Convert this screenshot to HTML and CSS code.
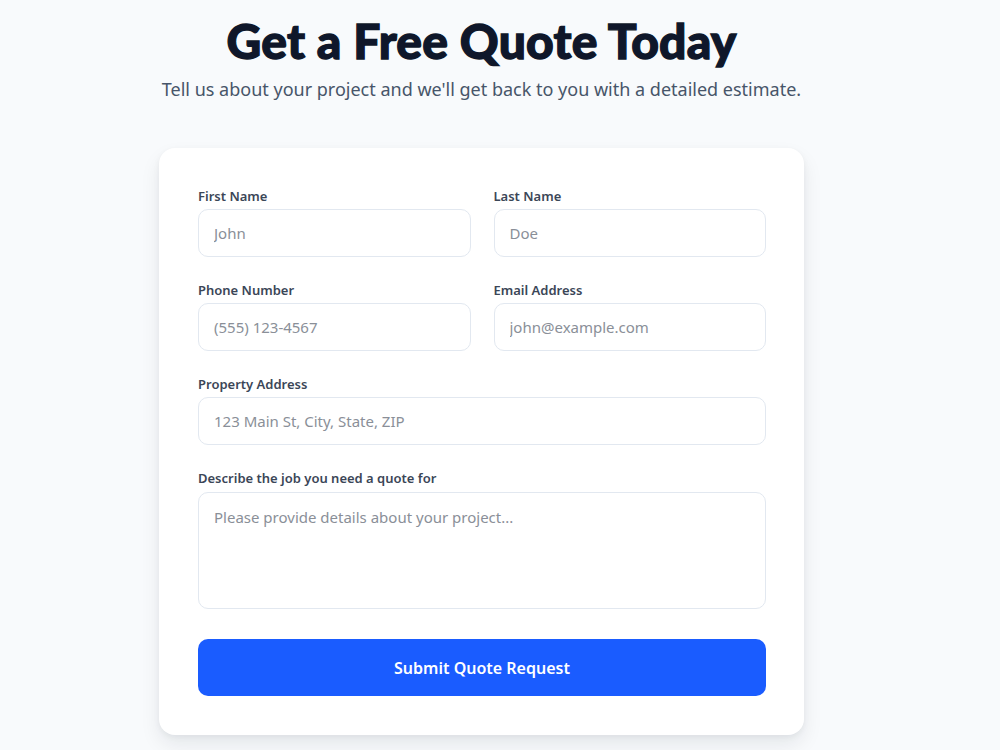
FILE: index.html
```html
<!DOCTYPE html>
<html lang="en">
<head>
    <meta charset="UTF-8">
    <meta name="viewport" content="width=device-width, initial-scale=1.0">
    <title>Get a Free Quote</title>
    <link rel="stylesheet" href="styles.css">
</head>
<body>
    <main class="page">
        <header class="intro">
            <h1>Get a Free Quote Today</h1>
            <p class="subtitle">Tell us about your project and we'll get back to you with a detailed estimate.</p>
        </header>

        <form class="quote-card" onsubmit="return false;">
            <div class="row">
                <div class="field">
                    <label for="firstName">First Name</label>
                    <input type="text" id="firstName" placeholder="John">
                </div>
                <div class="field">
                    <label for="lastName">Last Name</label>
                    <input type="text" id="lastName" placeholder="Doe">
                </div>
            </div>

            <div class="row">
                <div class="field">
                    <label for="phone">Phone Number</label>
                    <input type="tel" id="phone" placeholder="(555) 123-4567">
                </div>
                <div class="field">
                    <label for="email">Email Address</label>
                    <input type="email" id="email" placeholder="john@example.com">
                </div>
            </div>

            <div class="field">
                <label for="address">Property Address</label>
                <input type="text" id="address" placeholder="123 Main St, City, State, ZIP">
            </div>

            <div class="field">
                <label for="details">Describe the job you need a quote for</label>
                <textarea id="details" placeholder="Please provide details about your project..."></textarea>
            </div>

            <button type="submit" class="btn">Submit Quote Request</button>
        </form>
    </main>
</body>
</html>
```

FILE: styles.css
```css
* {
    margin: 0;
    padding: 0;
    box-sizing: border-box;
    font-family: 'Noto Sans', 'Open Sans', sans-serif;
}

body {
    background-color: #f8fafc;
    min-height: 100vh;
    padding-right: 37px;
}

.page {
    width: 645px;
    margin: 0 auto;
    padding-top: 14px;
}

.intro {
    text-align: center;
    margin-bottom: 46px;
}

h1 {
    font-family: 'Lato', sans-serif;
    font-weight: 900;
    font-size: 48px;
    line-height: 54px;
    color: #0f172a;
    -webkit-text-stroke: 1.3px #0f172a;
    letter-spacing: 0.2px;
    margin-bottom: 8px;
}

.subtitle {
    font-size: 18px;
    line-height: 26px;
    color: #475569;
    white-space: nowrap;
}

.quote-card {
    background-color: #ffffff;
    border-radius: 16px;
    box-shadow: 0 10px 20px rgba(15, 23, 42, 0.08), 0 2px 6px rgba(15, 23, 42, 0.05);
    padding: 38px 38px 39px 39px;
    display: flex;
    flex-direction: column;
    gap: 23px;
}

.row {
    display: grid;
    grid-template-columns: 1fr 1fr;
    gap: 23px;
}

.field {
    display: flex;
    flex-direction: column;
    gap: 3px;
}

label {
    font-size: 13px;
    line-height: 20px;
    font-weight: 600;
    color: #3b4657;
}

input,
textarea {
    width: 100%;
    height: 48px;
    padding: 0 15px;
    font-size: 15px;
    color: #0f172a;
    border: 1px solid #e2e8f0;
    border-radius: 10px;
    outline: none;
    background-color: #ffffff;
}

textarea {
    height: 117px;
    margin-top: 1px;
    padding: 12px 15px;
    resize: none;
    line-height: 24px;
}

input::placeholder,
textarea::placeholder {
    color: #8a8f98;
}

.btn {
    margin-top: 7px;
    height: 57px;
    border: none;
    border-radius: 10px;
    background-color: #1a5cff;
    color: #ffffff;
    font-size: 16px;
    font-weight: 600;
    cursor: pointer;
}
```
